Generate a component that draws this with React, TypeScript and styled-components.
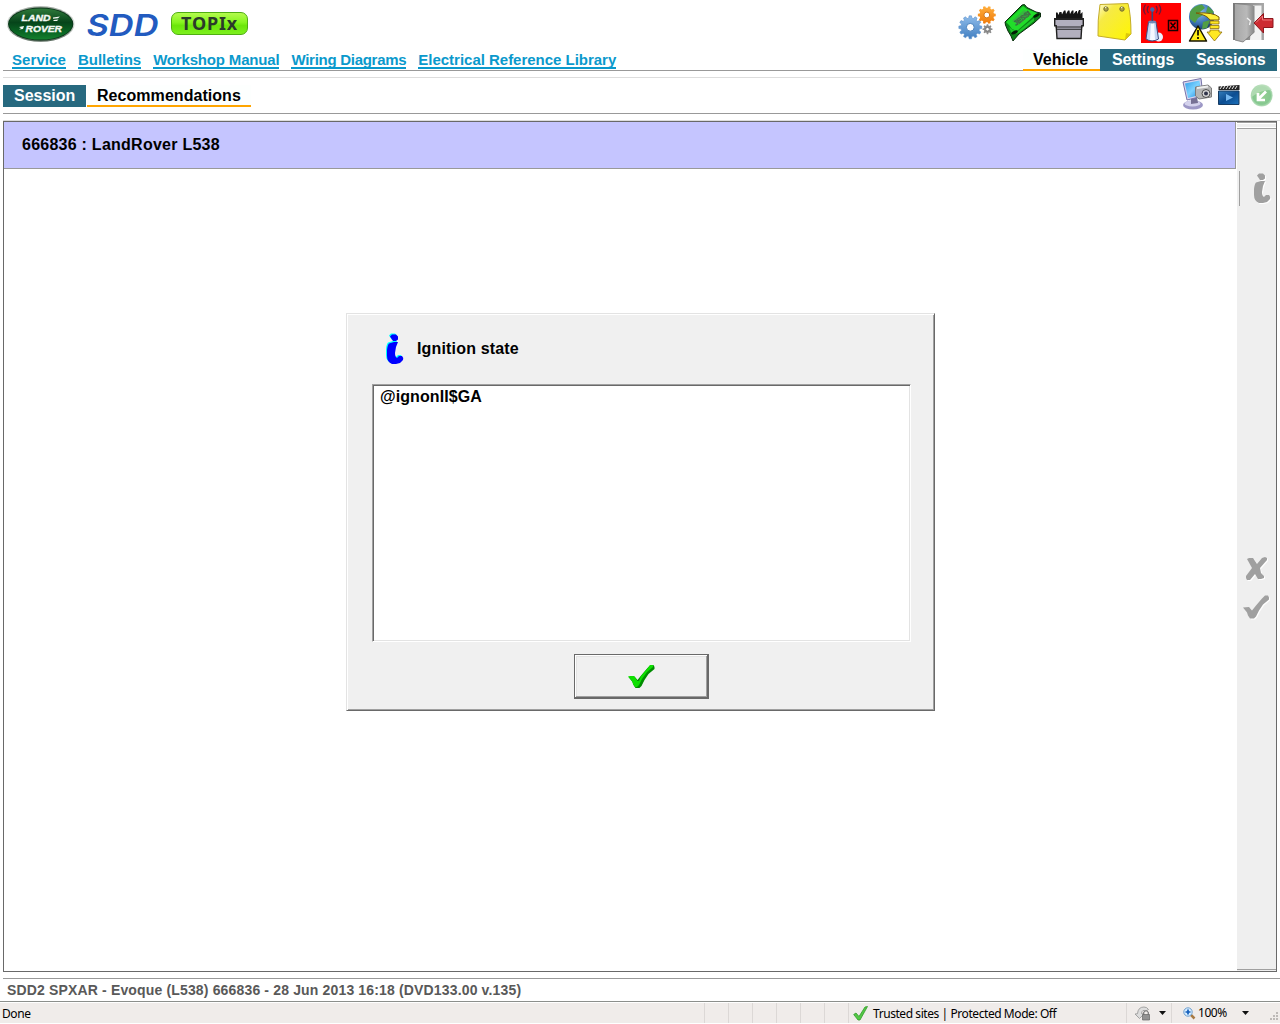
import React from "react";
import styled, { createGlobalStyle } from "styled-components";

const GlobalStyle = createGlobalStyle`
  * { box-sizing: border-box; }
  body { margin: 0; background: #fff; overflow: hidden; }
  svg { display: block; flex: none; }
`;

const Page = styled.div`
  width: 1280px;
  height: 1024px;
  display: flex;
  flex-direction: column;
  background: #fff;
  color: #000;
  font-family: "Liberation Sans", Arial, sans-serif;
  font-weight: bold;
  font-size: 16px;
  white-space: nowrap;
`;

const TopBar = styled.header`
  height: 49px;
  display: flex;
  justify-content: space-between;
  padding-right: 3px;
`;

const Brand = styled.div`
  display: flex;
  align-items: flex-start;
`;

const TopixBadge = styled.span`
  width: 77px;
  height: 23px;
  margin: 12px 0 0 10px;
  display: flex;
  align-items: center;
  justify-content: center;
  border: 1px solid #4fae12;
  border-radius: 7px;
  background: linear-gradient(#b4fa4e 0%, #86f51f 45%, #6be60a 60%, #7df01e 100%);
  color: #2b3a2b;
  font: bold 18px/21px "Noto Sans", Verdana, sans-serif;
  letter-spacing: 0.8px;
`;

const IconRow = styled.div`
  display: flex;
`;

const NavRow = styled.nav`
  height: 22px;
  margin: 0 3px;
  display: flex;
  justify-content: space-between;
  background: linear-gradient(#999, #999) 0 21px / 100% 1px no-repeat;
`;

const LinkList = styled.div`
  display: flex;
  gap: 12px;
  padding: 2px 0 0 9px;
`;

const NavLink = styled.a<{ $track?: number }>`
  height: 18px;
  color: #0a99cc;
  font-size: 15px;
  line-height: 18px;
  letter-spacing: ${(p) => p.$track ?? 0}px;
  border-bottom: 2px solid #0a99cc;
`;

const TabList = styled.div`
  display: flex;
`;

const Tab = styled.span<{ $active?: boolean; $width: number; $pad?: number; $track?: number }>`
  width: ${(p) => p.$width}px;
  height: 22px;
  padding-left: ${(p) => p.$pad ?? (p.$active ? 10 : 11)}px;
  line-height: 21px;
  letter-spacing: ${(p) => p.$track ?? 0}px;
  color: ${(p) => (p.$active ? "#000" : "#fff")};
  background: ${(p) => (p.$active ? "#fdfffe" : "#27697f")};
  border-bottom: ${(p) => (p.$active ? "2px solid #ffa500" : "none")};
`;

const Rule = styled.div<{ $color: string; $top: number; $left?: number }>`
  height: 1px;
  margin: ${(p) => p.$top}px 0 0 ${(p) => p.$left ?? 3}px;
  background: ${(p) => p.$color};
`;

const SubRow = styled.div`
  height: 28px;
  margin: 0 3px;
  padding-top: 7px;
  display: flex;
  justify-content: space-between;
`;

const SubTabs = styled(TabList)`
  gap: 1px;
`;

const SubIcons = styled.div`
  margin-top: -7px;
`;

const Frame = styled.main`
  width: 1274px;
  height: 851px;
  margin-left: 3px;
  display: flex;
  border: 1px solid #696969;
`;

const Workspace = styled.section`
  width: 1233px;
  display: flex;
  flex-direction: column;
`;

const VehicleBanner = styled.h1`
  width: 1232px;
  height: 47px;
  margin: 0;
  padding-left: 18px;
  border: solid #999;
  border-width: 0 1px 1px 0;
  background: #c5c5ff;
  font-size: 16px;
  line-height: 45px;
  letter-spacing: 0.25px;
`;

const Sidebar = styled.aside`
  width: 39px;
  display: flex;
  flex-direction: column;
  justify-content: space-between;
  background: #efefef;
`;

const SideTools = styled.div`
  flex: 1;
  padding-top: 36px;
`;

const SideCap = styled.div`
  height: 7px;
  border: solid #a0a0a0;
  border-width: 1px 0;
  box-shadow: inset 0 1px #fff, inset 0 -1px #fff;
`;

const SideFoot = styled.div`
  height: 2px;
  border-top: 1px solid #a0a0a0;
`;

const Dialog = styled.div`
  width: 589px;
  height: 398px;
  margin: 144px 0 0 342px;
  border: 1px solid;
  border-color: #e3e3e3 #696969 #696969 #e3e3e3;
  box-shadow: inset 1px 1px #fff, inset -1px -1px #a0a0a0;
  background: #f0f0f0;
  display: flex;
  flex-direction: column;
  padding: 19px 0 0 25px;
`;

const DialogTitle = styled.div`
  height: 32px;
  display: flex;
  align-items: center;
  gap: 12px;
  padding-left: 13px;
  line-height: 34px;
  letter-spacing: 0.17px;
`;

const Message = styled.div`
  width: 539px;
  height: 258px;
  margin-top: 19px;
  padding: 2px 7px;
  border: 1px solid;
  border-color: #a0a0a0 #fff #fff #a0a0a0;
  box-shadow: inset 1px 1px #696969, inset -1px -1px #e3e3e3;
  background: #fff;
  line-height: 20px;
  letter-spacing: 0.1px;
`;

const OkButton = styled.button`
  width: 135px;
  height: 45px;
  margin: 12px 0 0 202px;
  padding: 0 2px 2px 0;
  display: flex;
  align-items: center;
  justify-content: center;
  border: 1px solid #696969;
  box-shadow: inset -1px -1px #696969, inset 1px 1px #fff, inset -2px -2px #a0a0a0, inset 2px 2px #e3e3e3;
  background: #f0f0f0;
`;

const SessionLine = styled.div`
  height: 22px;
  padding-left: 7px;
  color: #595959;
  font-size: 14px;
  line-height: 22px;
  letter-spacing: 0.155px;
`;

const StatusBar = styled.footer`
  height: 20px;
  margin-top: 1px;
  display: flex;
  background: #f0ecea;
  font: 12px/20px "Noto Sans", "Segoe UI", sans-serif;
  letter-spacing: -0.43px;
`;

const StatusCell = styled.div<{ $width: number; $pad?: number }>`
  width: ${(p) => p.$width}px;
  padding-left: ${(p) => p.$pad ?? 0}px;
  display: flex;
  align-items: center;
  border-right: 1px solid #dcd8d6;

  &:last-child { border-right: none; }
`;

const CellText = styled.span<{ $left: number; $width: number }>`
  width: ${(p) => p.$width}px;
  margin-left: ${(p) => p.$left}px;
`;

const StatusLabel = styled(CellText)`
  padding-top: 2px;
`;

/* Icons share the page's coordinates, so each one is a window on its slot. */
const Slot = ({ x, y = 0, w, h, children }: { x: number; y?: number; w: number; h: number; children: React.ReactNode }) => (
  <svg width={w} height={h} viewBox={`${x} ${y} ${w} ${h}`}>{children}</svg>
);

const gearPath = (cx: number, cy: number, outer: number, inner: number, teeth: number) => {
  const step = (Math.PI * 2) / teeth;
  const points: string[] = [];
  for (let i = 0; i < teeth; i++) {
    [[-0.32, inner], [-0.2, outer], [0.2, outer], [0.32, inner]].forEach(([t, r]) => {
      const a = (i + t) * step;
      points.push(`${(cx + r * Math.cos(a)).toFixed(2)} ${(cy + r * Math.sin(a)).toFixed(2)}`);
    });
  }
  return `M${points.join("L")}Z`;
};

const LandRoverLogo = () => (
  <Slot x={0} w={82} h={49}>
    <defs>
      <linearGradient id="oval" x1="0" y1="0" x2="0" y2="1">
        <stop offset="0" stopColor="#2f7a3b" /><stop offset=".45" stopColor="#06441a" />
        <stop offset=".8" stopColor="#0b6a25" /><stop offset="1" stopColor="#14802f" />
      </linearGradient>
      <linearGradient id="rim" x1="0" y1="0" x2="0" y2="1">
        <stop offset="0" stopColor="#9aa39b" /><stop offset=".5" stopColor="#e3e8e4" /><stop offset="1" stopColor="#56675a" />
      </linearGradient>
    </defs>
    <ellipse cx="40.700" cy="24" rx="34" ry="17.800" fill="url(#rim)" />
    <ellipse cx="40.700" cy="24" rx="32.700" ry="16.500" fill="#0b3519" />
    <ellipse cx="40.700" cy="24" rx="31.800" ry="15.600" fill="url(#oval)" />
    <g fill="#f4f8f4" stroke="#f4f8f4" strokeWidth=".4" fontFamily="Liberation Sans, sans-serif" fontWeight="bold" fontStyle="italic" fontSize="9.500">
      <text x="21.500" y="21.400" textLength="29" lengthAdjust="spacingAndGlyphs">LAND</text>
      <text x="25.500" y="32.400" textLength="36.500" lengthAdjust="spacingAndGlyphs">ROVER</text>
    </g>
    <path d="M53 17.500l7-1-2 1.800-5 .4zM53.500 20l5-.6-1.500 1.500-3.500.2zM19 27l5-1-1 3-4 .5 2-1.300z" fill="#f4f8f4" />
  </Slot>
);

const SddLogo = () => (
  <Slot x={82} w={79} h={49}>
    <text x="86.500" y="35.600" fill="#225bc0" fontFamily="Inter, Liberation Sans, sans-serif" fontWeight="600" fontStyle="italic" fontSize="30" textLength="72" lengthAdjust="spacingAndGlyphs">SDD</text>
  </Slot>
);

const GearsIcon = () => (
  <Slot x={950} w={50} h={49}>
    <defs>
      <linearGradient id="blueGear" x1="0" y1="0" x2="0" y2="1"><stop offset="0" stopColor="#8ebcea" /><stop offset="1" stopColor="#4380c2" /></linearGradient>
      <linearGradient id="orangeGear" x1="0" y1="0" x2="0" y2="1"><stop offset="0" stopColor="#ffae3c" /><stop offset="1" stopColor="#ef7b0b" /></linearGradient>
    </defs>
    <path d={gearPath(970.3, 27.3, 11.5, 9.300, 12)} fill="url(#blueGear)" stroke="#5b91cc" strokeWidth=".6" />
    <circle cx="970.300" cy="27.300" r="3.900" fill="#fff" stroke="#4a83c0" />
    <path d={gearPath(986.8, 15, 9, 7.300, 10)} fill="url(#orangeGear)" />
    <circle cx="986.800" cy="15" r="2.900" fill="#fff" stroke="#d77612" />
    <path d={gearPath(987.5, 29.2, 5, 3.700, 8)} fill="#8c8c8c" />
    <circle cx="987.500" cy="29.200" r="1.800" fill="#fff" stroke="#686868" strokeWidth=".7" />
  </Slot>
);

const BoardIcon = () => (
  <Slot x={1000} w={48} h={49}>
    <path d="M1005 22L1022 5L1024.500 4.500L1027 7.500L1036 12L1040.500 13V17L1034 23L1019 34L1013 41L1011 36L1008 31L1005.500 25Z" fill="#0c8317" stroke="#0a2d0d" strokeWidth="1" strokeLinejoin="round" />
    <path d="M1006 22L1023 6L1027 9L1037 13L1026 23L1017 31L1012 29L1009 25Z" fill="#21dd2a" />
    <path d="M1009 27L1013 30L1018 31L1034 18L1034 21L1019 33L1012 35Z" fill="#1fc52b" />
    <path d="M1012 21L1024 10L1031 14L1019 25Z" fill="#36b83e" />
    <text transform="translate(1016 26) rotate(-38)" fill="#55705a" stroke="#2e5934" strokeWidth=".3" fontFamily="Liberation Sans" fontWeight="bold" fontSize="7" textLength="19">JESSI</text>
    <ellipse cx="1014.500" cy="32.500" rx="3.600" ry="1.600" transform="rotate(-25 1014.500 32.500)" fill="#031e05" />
    <ellipse cx="1036.500" cy="15.500" rx="3.600" ry="1.400" transform="rotate(-28 1036.500 15.500)" fill="#031e05" />
  </Slot>
);

const BatteryIcon = () => (
  <Slot x={1048} w={42} h={49}>
    <path d="M1056 20V12.500h1.500l1 2.500 1-3h2l.5 2.500 2-4h1.500l.5 3.500 2-3.500h1.500l.5 3.500 2-3.500h1.500v3.500l2.500-3h1v3l2-4h1.500v4l2-2v6Z" fill="#151515" />
    <path d="M1054.700 18.700h28.600v7h-1.500L1081 38.500H1057L1056.200 25.700h-1.500Z" fill="#b2afbe" stroke="#202020" strokeWidth="1.400" />
    <path d="M1054 19.500h29.500M1055.500 27h27M1056 29.200h26" stroke="#222" strokeWidth="1.100" />
  </Slot>
);

const NoteIcon = () => (
  <Slot x={1090} w={47} h={49}>
    <defs><linearGradient id="note" x1="0" y1="0" x2="1" y2="1"><stop stopColor="#fffbd6" /><stop offset=".28" stopColor="#f6ea45" /><stop offset="1" stopColor="#fff600" /></linearGradient></defs>
    <path d="M1100 4.500L1128 3.500Q1131 15 1131 34L1125 40L1098 36Q1097.500 20 1100 4.500Z" fill="url(#note)" stroke="#c4ac27" strokeWidth="1" />
    <path d="M1125 40L1126 33L1131 34Z" fill="#dcc80c" />
    <circle cx="1106" cy="9" r="2.200" fill="#a9a044" stroke="#746d2c" />
    <circle cx="1122" cy="9" r="2.200" fill="#a9a044" stroke="#746d2c" />
    <path d="M1105 8l1.500-1M1121 8l1.500-1" stroke="#fff" />
  </Slot>
);

const TransmitterIcon = () => (
  <Slot x={1137} w={48} h={49}>
    <rect x="1141" y="3" width="40" height="40" fill="#f00" />
    <circle cx="1158.500" cy="37" r="4.500" fill="#ebf1ff" />
    <path d="M1148.500 22L1156 22L1158.500 39Q1152 43 1146 39Z" fill="#c4d5f2" stroke="#3d4f82" strokeWidth="1" />
    <path d="M1151 23h3l1 17h-5Z" fill="#f5f8ff" />
    <ellipse cx="1152.200" cy="22" rx="3.800" ry="1.400" fill="#7289b9" />
    <path d="M1152.300 21V10" stroke="#344a7b" strokeWidth="1.600" />
    <circle cx="1152.300" cy="9.500" r="2.200" fill="#4065ab" />
    <path d="M1148.500 6Q1146 9.500 1148.500 13M1145.500 4.500Q1142 9.500 1145.500 14.500M1156 6Q1158.500 9.500 1156 13M1159 4.500Q1162.500 9.500 1159 14.500" fill="none" stroke="#6d1838" strokeWidth="1.300" />
    <path d="M1168.500 20.500h9v10h-9ZM1170.500 22.500l5 6m0-6l-5 6" fill="none" stroke="#160000" strokeWidth="1.500" />
  </Slot>
);

const GlobeIcon = () => (
  <Slot x={1185} w={44} h={49}>
    <defs><radialGradient id="globe" cx=".4" cy=".3" r=".75"><stop stopColor="#8ec4ed" /><stop offset=".65" stopColor="#366eae" /><stop offset="1" stopColor="#153763" /></radialGradient></defs>
    <circle cx="1201.700" cy="16.700" r="12.700" fill="url(#globe)" />
    <path d="M1190 12Q1194 5 1202 4.500L1205 8L1200 12L1203 15L1198 18L1195 23L1190 19ZM1208 6L1214 12L1210 15L1206 12ZM1203 22L1210 20L1207 28L1202 29Z" fill="#519e45" />
    <path d="M1196 13Q1213 12 1219 17V20H1210Q1207 15 1196 13Z" fill="#ffef3a" stroke="#765b09" strokeWidth="1" />
    <path d="M1210 21h9v3h-9ZM1210 25.500h9v3h-9ZM1210 30h9v2h3L1214.500 41L1207 32h3Z" fill="#ffe821" stroke="#8f7010" strokeWidth=".8" />
    <path d="M1198 26L1206.500 41H1189.500Z" fill="#ffed16" stroke="#171500" strokeWidth="1.500" strokeLinejoin="round" />
    <path d="M1198 30v5.500m0 1.500v2" stroke="#171500" strokeWidth="1.800" />
  </Slot>
);

const ExitIcon = () => (
  <Slot x={1229} w={48} h={49}>
    <defs>
      <linearGradient id="door" x1="0" y1="0" x2="1" y2="0"><stop stopColor="#a7a7a7" /><stop offset=".6" stopColor="#b9b9b9" /><stop offset="1" stopColor="#858585" /></linearGradient>
      <linearGradient id="jamb" x1="0" y1="0" x2="1" y2="0"><stop stopColor="#777" /><stop offset="1" stopColor="#a8a8a8" /></linearGradient>
    </defs>
    <path d="M1233 3h31v37h-31Z" fill="url(#jamb)" />
    <path d="M1253 5.500h8.500V40H1250Z" fill="#f2f2f2" />
    <path d="M1235 4L1254.500 6V32L1243 42L1235 40Z" fill="url(#door)" />
    <path d="M1235 40L1243 42L1254.500 32" fill="none" stroke="#777" strokeWidth=".8" />
    <path d="M1247 18l3.500 3-1 4" fill="none" stroke="#f4f4f4" strokeWidth="1.300" />
    <path d="M1254 23L1263.500 13.500V18.500H1273V27.500H1263.500V33Z" fill="#cd2b32" stroke="#8d171d" strokeWidth="1" />
    <path d="M1256 22.500L1262.500 16V20H1272" fill="none" stroke="#ec777b" strokeWidth="1" />
  </Slot>
);

const ToolIcons = () => (
  <Slot x={1177} y={78} w={100} h={35}>
    <defs>
      <linearGradient id="screen" x1="0" y1="0" x2="1" y2="1"><stop stopColor="#309de9" /><stop offset=".5" stopColor="#7cd2ff" /><stop offset="1" stopColor="#1784dc" /></linearGradient>
      <linearGradient id="clip" x1="0" y1="0" x2="1" y2="1"><stop stopColor="#347ebc" /><stop offset=".5" stopColor="#0c4d91" /><stop offset="1" stopColor="#1b72bc" /></linearGradient>
      <radialGradient id="restore"><stop stopColor="#94cf91" /><stop offset=".8" stopColor="#86c890" /><stop offset="1" stopColor="#badfbd" /></radialGradient>
    </defs>
    <ellipse cx="1193" cy="105" rx="10" ry="4.500" fill="#9d98c6" />
    <ellipse cx="1192.500" cy="103.500" rx="8" ry="3" fill="#d4d2ec" />
    <path d="M1191 98l6-1 1 6-7 1Z" fill="#767194" />
    <path d="M1183 82L1201 78.500L1203 96L1187 100Z" fill="#d7d5ee" stroke="#7773a9" strokeWidth="1" />
    <path d="M1185 83.500L1199.500 80.500L1201.500 94.500L1188 98Z" fill="url(#screen)" />
    <path d="M1195.500 87L1208 85L1211.500 88V97L1199 99L1195.500 96Z" fill="#b5b5b5" stroke="#7c7c7c" strokeWidth="1" />
    <path d="M1197 88l11-1.500" stroke="#eee" strokeWidth="2" />
    <circle cx="1206" cy="93.500" r="4" fill="#d8d8d8" stroke="#4d4d4d" />
    <circle cx="1206" cy="93.500" r="2" fill="#31344a" />
    <path d="M1218.500 91h20.500v13.500h-20.500Z" fill="url(#clip)" stroke="#163c63" strokeWidth="1" />
    <path d="M1218.500 86.500L1239.500 85V90H1218.500Z" fill="#242424" />
    <path d="M1220 89l2-3m1 3l2-3m1 3l2-3m1 3l2-3m1 3l2-3m1 3l2-3" stroke="#eee" strokeWidth="1" />
    <path d="M1226 94v7l7-3.500Z" fill="#75b7ef" />
    <circle cx="1261.700" cy="95.500" r="11" fill="url(#restore)" />
    <path d="M1251.500 97Q1262 89 1272 90Q1267 83 1259 85Q1251 89 1251.500 97Z" fill="#bfe1bf" opacity=".7" />
    <path d="M1266 91.500L1259 98.500M1258 93V100H1265" fill="none" stroke="#fff" strokeWidth="2.700" />
  </Slot>
);

const InfoShape = ({ color, edge, dx }: { color: string; edge: string; dx: number }) => {
  const shape = (
    <>
      <path d="M5 3.500L7 1.500h4l2 2v3l-2 1.500H8Z" />
      <path d="M4 10.500L9 9H13L11 14L10 20Q10 24 12 25L14 23H17Q19 25 18 27L15 30L11 31H7Q2 29 2 23V17Q2.500 12 4 10.500Z" />
    </>
  );
  return (
    <>
      <g fill={edge} transform={`translate(${dx} ${dx})`}>{shape}</g>
      <g fill={color}>{shape}</g>
    </>
  );
};

const checkPath = "M1 12L7 11.500L10 15L14 10L20 3L23 0H26L27 2V4L21 9L17 15L14 21L12 23H8L6 20L5 17Z";

const SideIcons = () => (
  <Slot x={1237} y={165} w={39} h={470}>
    <path d="M1239.500 171v35" stroke="#a0a0a0" />
    <g transform="translate(1252 172)"><InfoShape color="#a0a0a0" edge="#fff" dx={1} /></g>
    {[{ d: 1, c: "#fff" }, { d: 0, c: "#a0a0a0" }].map(({ d, c }) => (
      <g key={c} fill={c} transform={`translate(${d} ${d})`}>
        <path d="M1247 559L1249 558H1253L1257 564L1262 558L1265 557L1267 558V560L1260 568L1261 573L1264 576V578L1261 579H1258L1255 574L1250 580H1247L1246 578V576L1252 568Z" />
        <path transform="translate(1242 595.500)" d={checkPath} />
      </g>
    ))}
  </Slot>
);

const CheckIcon = () => (
  <svg width="28" height="26" viewBox="0 0 28 26">
    <path d={checkPath} transform="translate(.5 2)" fill="#008c00" />
    <path d="M1 13.500L3 13H7L10 17V18H12L14 13L20 6L23 2H26V4L20 9L15 16L12 22L10 24H8L6 21L5 18Z" fill="#0de000" />
  </svg>
);

const Caret = () => <svg width="7" height="4" viewBox="0 0 7 4"><path d="M0 0h7L3.500 4Z" fill="#111" /></svg>;

const TrustedIcon = () => (
  <svg width="15" height="15" viewBox="0 0 15 15"><path d="M.7 8.500L3 7l3 3.500L12 1l2.500-.5L7 14H5Z" fill="#54c846" stroke="#319d2a" strokeWidth=".8" /></svg>
);

const PrivacyIcon = () => (
  <svg width="16" height="15" viewBox="0 0 16 15">
    <path d="M0 8l2.500-.3Q3 1 9 1q3 0 4.500 2.500L11 5Q7 3 6.500 7.500L9 8l-4.500 4.500Z" fill="#ddd" stroke="#929292" strokeWidth=".8" />
    <path d="M8.700 9V6.500q2.300-3.500 4.600 0V9" fill="none" stroke="#777" strokeWidth="1.200" />
    <path d="M7.500 8.500h7v5.500h-7Z" fill="#929292" stroke="#666" strokeWidth=".7" />
  </svg>
);

const ZoomIcon = () => (
  <svg width="13" height="13" viewBox="0 0 13 13">
    <path d="M8 8l3.500 3.500" stroke="#a77a45" strokeWidth="2.500" />
    <circle cx="5" cy="5" r="4.200" fill="#d8eeff" stroke="#6c9dcd" />
    <path d="M5 2.500v5M2.500 5h5" stroke="#145fbc" strokeWidth="1.700" />
  </svg>
);

const Grip = () => (
  <svg width="10" height="18" viewBox="0 -8 10 18">
    <path d="M7 0h2v2H7ZM4 3h2v2H4ZM7 3h2v2H7ZM1 6h2v2H1ZM4 6h2v2H4ZM7 6h2v2H7Z" fill="#bdb9b7" />
  </svg>
);

const links = [
  { label: "Service", track: 0.08 },
  { label: "Bulletins", track: -0.02 },
  { label: "Workshop Manual", track: -0.17 },
  { label: "Wiring Diagrams", track: -0.28 },
  { label: "Electrical Reference Library", track: -0.02 },
];

export default function App() {
  return (
    <Page>
      <GlobalStyle />
      <TopBar>
        <Brand>
          <LandRoverLogo />
          <SddLogo />
          <TopixBadge>TOPIx</TopixBadge>
        </Brand>
        <IconRow>
          <GearsIcon />
          <BoardIcon />
          <BatteryIcon />
          <NoteIcon />
          <TransmitterIcon />
          <GlobeIcon />
          <ExitIcon />
        </IconRow>
      </TopBar>
      <NavRow>
        <LinkList>
          {links.map((l) => <NavLink key={l.label} $track={l.track}>{l.label}</NavLink>)}
        </LinkList>
        <TabList>
          <Tab $active $width={77}>Vehicle</Tab>
          <Tab $width={84} $pad={12} $track={-0.1}>Settings</Tab>
          <Tab $width={93} $pad={12} $track={-0.1}>Sessions</Tab>
        </TabList>
      </NavRow>
      <Rule $color="#ddd" $top={6} />
      <SubRow>
        <SubTabs>
          <Tab $width={83}>Session</Tab>
          <Tab $active $width={164} $track={0.05}>Recommendations</Tab>
        </SubTabs>
        <SubIcons><ToolIcons /></SubIcons>
      </SubRow>
      <Rule $color="#999" $top={7} />
      <Rule $color="#ddd" $top={6} />
      <Frame>
        <Workspace>
          <VehicleBanner>666836 : LandRover L538</VehicleBanner>
          <Dialog>
            <DialogTitle>
              <svg width="20" height="32" viewBox="0 0 20 32"><InfoShape color="#00f" edge="#0ff" dx={-1} /></svg>
              Ignition state
            </DialogTitle>
            <Message>@ignonII$GA</Message>
            <OkButton><CheckIcon /></OkButton>
          </Dialog>
        </Workspace>
        <Sidebar>
          <SideCap />
          <SideTools><SideIcons /></SideTools>
          <SideFoot />
        </Sidebar>
      </Frame>
      <Rule $color="#999" $top={6} />
      <SessionLine>SDD2 SPXAR - Evoque (L538) 666836 - 28 Jun 2013 16:18 (DVD133.00 v.135)</SessionLine>
      <Rule $color="#8c8f8c" $top={0} $left={0} />
      <StatusBar>
        <StatusCell $width={705} $pad={2}><StatusLabel $left={0} $width={60}>Done</StatusLabel></StatusCell>
        {[1, 2, 3, 4, 5, 6].map((n) => <StatusCell key={n} $width={24} />)}
        <StatusCell $width={278} $pad={4}>
          <TrustedIcon />
          <StatusLabel $left={5} $width={200}>Trusted sites | Protected Mode: Off</StatusLabel>
        </StatusCell>
        <StatusCell $width={45} $pad={8}>
          <PrivacyIcon />
          <CellText $left={4} $width={4} />
          <Caret />
        </StatusCell>
        <StatusCell $width={108} $pad={11}>
          <ZoomIcon />
          <CellText $left={2} $width={44}>100%</CellText>
          <Caret />
          <CellText $left={10} $width={10} />
          <Grip />
        </StatusCell>
      </StatusBar>
    </Page>
  );
}
